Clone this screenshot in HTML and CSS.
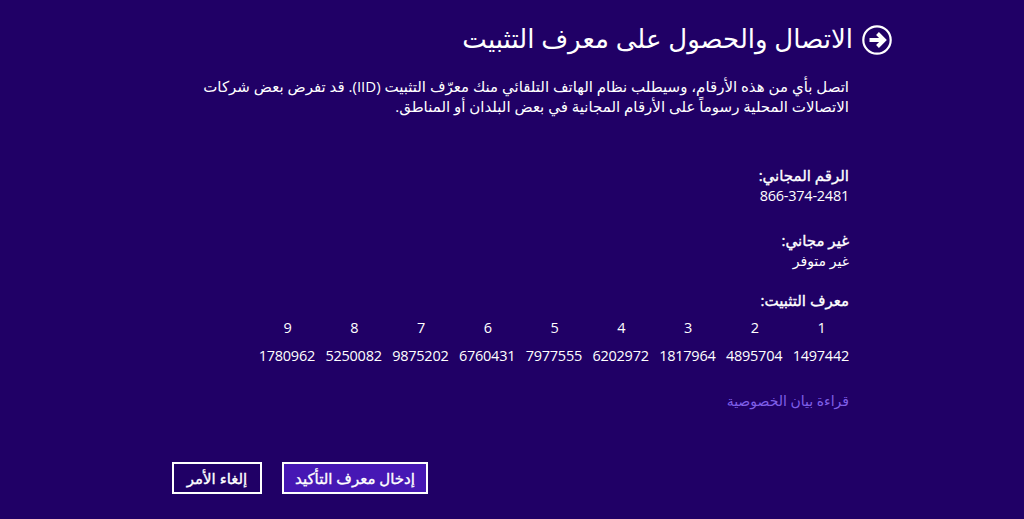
FILE: index.html
```html
<!DOCTYPE html>
<html lang="ar" dir="rtl">

<head>
    <meta charset="UTF-8">
    <title>الاتصال والحصول على معرف التثبيت</title>
    <link rel="stylesheet" href="styles.css">
</head>

<body>
    <div class="header">
        <svg class="back-icon" width="32" height="32" viewBox="0 0 32 32">
            <circle cx="16" cy="16" r="13.7" fill="none" stroke="#fff" stroke-width="2.2" />
            <path d="M8.5 16H22M16.5 9.5L23 16L16.5 22.5" fill="none" stroke="#fff" stroke-width="4" />
        </svg>
        <h1 class="title">الاتصال والحصول على معرف التثبيت</h1>
    </div>

    <div class="content">
        <p class="intro">اتصل بأي من هذه الأرقام، وسيطلب نظام الهاتف التلقائي منك معرّف التثبيت (IID). قد تفرض بعض شركات الاتصالات المحلية رسوماً على الأرقام المجانية في بعض البلدان أو المناطق.</p>

        <div class="phone-block">
            <div class="label">الرقم المجاني:</div>
            <div class="value digits" dir="ltr">866-374-2481</div>
        </div>

        <div class="phone-block second">
            <div class="label">غير مجاني:</div>
            <div class="value small">غير متوفر</div>
        </div>

        <div class="label iid-label">معرف التثبيت:</div>
        <div class="iid-grid digits">
            <span>1</span><span>2</span><span>3</span><span>4</span><span>5</span><span>6</span><span>7</span><span>8</span><span>9</span>
            <span>1497442</span><span>4895704</span><span>1817964</span><span>6202972</span><span>7977555</span><span>6760431</span><span>9875202</span><span>5250082</span><span>1780962</span>
        </div>

        <a class="privacy small" href="#">قراءة بيان الخصوصية</a>
    </div>

    <div class="buttons">
        <button class="btn primary">إدخال معرف التأكيد</button>
        <button class="btn">إلغاء الأمر</button>
    </div>
</body>

</html>
```
FILE: styles.css
```css
* {
    margin: 0;
    padding: 0;
    box-sizing: border-box;
}

html,
body {
    height: 100%;
    overflow: hidden;
}

body {
    background: #200066;
    color: #fff;
    font-family: "Open Sans", "DejaVu Sans", sans-serif;
    font-size: 15px;
}

.header {
    display: flex;
    align-items: center;
    gap: 8px;
    padding: 23px 131px 0 0;
    height: 56px;
}

.title {
    font-size: 26px;
    font-weight: 400;
    line-height: 32px;
    padding-bottom: 4px;
}

.content {
    padding: 20px 175px 0 0;
}

.intro {
    width: 650px;
    line-height: 20px;
}

.phone-block {
    margin-top: 49px;
    line-height: 20px;
}

.phone-block.second {
    margin-top: 24px;
}

/* the bold arabic face is too wide, so thicken the regular one */
.label {
    -webkit-text-stroke: 0.35px #fff;
}

.value {
    text-align: right;
    margin-top: 1px;
}

.small {
    font-size: 14px;
}

.digits {
    font-size: 14.5px;
    letter-spacing: -0.25px;
}

.iid-label {
    margin-top: 19px;
    line-height: 20px;
}

.iid-grid {
    display: grid;
    grid-template-columns: repeat(9, 55px);
    column-gap: 11.75px;
    row-gap: 8px;
    margin-top: 8px;
    line-height: 20px;
    text-align: center;
}

.privacy {
    display: block;
    margin-top: 25px;
    color: #7f5fe8;
    text-decoration: none;
    line-height: 20px;
}

.buttons {
    display: flex;
    gap: 20px;
    padding: 51px 596px 0 0;
}

.btn {
    height: 32px;
    width: 90px;
    border: 2px solid #fff;
    background: transparent;
    color: #fff;
    font-family: inherit;
    font-size: 15px;
    -webkit-text-stroke: 0.35px #fff;
    white-space: nowrap;
}

.btn.primary {
    width: 146px;
    background: #4617b4;
}
```
